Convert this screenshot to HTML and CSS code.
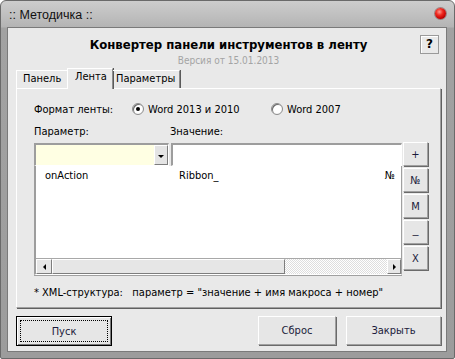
FILE: index.html
```html
<!DOCTYPE html>
<html lang="ru">
<head>
<meta charset="utf-8">
<title>Методичка</title>
<link rel="stylesheet" href="styles.css">
</head>
<body>
<div class="window">
  <div class="titlebar">
    <span class="title-text">:: Методичка ::</span>
    <span class="close-dot"></span>
  </div>
  <div class="client">
    <div class="header">
      <div class="h-title">Конвертер панели инструментов в ленту</div>
      <div class="h-version">Версия от 15.01.2013</div>
      <div class="help-btn">?</div>
    </div>
    <div class="tabs">
      <div class="tab tab-panel">Панель</div>
      <div class="tab tab-active">Лента</div>
      <div class="tab tab-params">Параметры</div>
    </div>
    <div class="panel">
      <div class="format-row">
        <span class="format-label">Формат ленты:</span>
        <span class="radio-opt opt-first"><span class="radio checked"></span>Word 2013 и 2010</span>
        <span class="radio-opt"><span class="radio"></span>Word 2007</span>
      </div>
      <div class="labels-row">
        <span class="lbl-param">Параметр:</span>
        <span>Значение:</span>
      </div>
      <div class="editor">
        <div class="left-col">
          <div class="inputs">
            <div class="combo"><span class="combo-btn"><span class="tri-down"></span></span></div>
            <div class="textbox"></div>
          </div>
          <div class="list">
            <div class="list-rows">
              <div class="list-row">
                <span class="c-param">onAction</span>
                <span class="c-value">Ribbon_</span>
                <span class="c-num">№</span>
              </div>
            </div>
            <div class="hscroll">
              <span class="sb-arrow"><span class="tri-left"></span></span>
              <span class="sb-thumb"></span>
              <span class="sb-track"></span>
              <span class="sb-arrow"><span class="tri-right"></span></span>
            </div>
          </div>
        </div>
        <div class="side-btns">
          <div class="btn side">+</div>
          <div class="btn side">№</div>
          <div class="btn side">M</div>
          <div class="btn side dash">–</div>
          <div class="btn side">X</div>
        </div>
      </div>
      <div class="footnote">* XML-структура: &nbsp; параметр = "значение + имя макроса + номер"</div>
    </div>
    <div class="actions">
      <div class="btn big default"><span class="focus">Пуск</span></div>
      <div class="spacer"></div>
      <div class="btn big reset">Сброс</div>
      <div class="btn big">Закрыть</div>
    </div>
  </div>
</div>
</body>
</html>
```
FILE: styles.css
```css
html, body {
  margin: 0;
  padding: 0;
  background: #ffffff;
}
body {
  font-family: "DejaVu Sans Condensed", "DejaVu Sans", sans-serif;
  font-stretch: condensed;
  font-size: 11px;
  color: #000;
}
.window {
  width: 455px;
  height: 359px;
  box-sizing: border-box;
  border: 1px solid #6a6a6a;
  border-radius: 6px 6px 2px 2px;
  background: linear-gradient(#cdcdcd, #b4b4b4 26px, #a2a2a2 27px, #9c9c9c);
  padding: 0 7px 6px 6px;
  display: flex;
  flex-direction: column;
}
.titlebar {
  height: 26px;
  display: flex;
  align-items: center;
  justify-content: space-between;
  padding-left: 1px;
}
.title-text {
  font-family: "Liberation Sans", Arial, sans-serif;
  font-stretch: normal;
  font-size: 12.5px;
  color: #111;
  margin-top: 2px;
  padding-left: 1px;
}
.close-dot {
  width: 11px;
  height: 11px;
  border-radius: 50%;
  background: radial-gradient(circle at 40% 35%, #ff9a90 0, #f02a20 35%, #c00000 70%, #800000 100%);
  box-shadow: 0 0 0 1px rgba(90,0,0,0.35);
  margin-right: 1px;
  margin-top: -2px;
}
.client {
  flex: 1;
  background: #e9e9e9;
  border: 1px solid #7a7a7a;
  padding: 0 5px 0 8px;
  display: flex;
  flex-direction: column;
}
.header {
  display: grid;
  grid-template-columns: 1fr auto 1fr;
  padding-top: 7px;
}
.h-title {
  grid-column: 2;
  grid-row: 1;
  font-weight: bold;
  font-size: 13px;
  line-height: 19px;
  text-align: center;
  color: #000;
}
.h-version {
  grid-column: 2;
  grid-row: 2;
  font-size: 10px;
  line-height: 13px;
  text-align: center;
  color: #a4a4a4;
}
.help-btn {
  grid-column: 3;
  grid-row: 1 / span 2;
  justify-self: end;
  align-self: start;
  width: 17px;
  height: 17px;
  margin-right: 2px;
  border: 1px solid #9a9a9a;
  box-shadow: inset 1px 1px #fff;
  font-weight: bold;
  font-size: 12px;
  line-height: 17px;
  text-align: center;
  font-family: "DejaVu Sans", sans-serif;
  font-stretch: normal;
}
.tabs {
  display: flex;
  align-items: flex-end;
  height: 21px;
  margin-top: 1px;
  margin-bottom: -1px;
  position: relative;
  z-index: 1;
}
.tab {
  box-sizing: border-box;
  height: 18px;
  line-height: 16px;
  padding-left: 6px;
  border-top: 1px solid #fff;
  margin-bottom: 1px;
}
.tab-panel {
  width: 51px;
  border-left: 1px solid #fff;
}
.tab-active {
  width: 46px;
  height: 21px;
  margin-bottom: 0;
  line-height: 15px;
  padding-left: 7px;
  border-left: 1px solid #fff;
  border-right: 1px solid #8c8c8c;
  background: #e9e9e9;
  box-shadow: 1px 0 #5a5a5a;
}
.tab-params {
  width: 67px;
  padding-left: 3px;
  border-right: 1px solid #8c8c8c;
  box-shadow: 1px 0 #5a5a5a;
}
.panel {
  width: 425px;
  box-sizing: border-box;
  border-top: 1px solid #fff;
  border-left: 1px solid #fff;
  border-right: 1px solid #a0a0a0;
  border-bottom: 1px solid #a0a0a0;
  box-shadow: 1px 1px #606060;
  padding: 13px 0 7px 17px;
}
.format-row {
  display: flex;
  align-items: center;
  height: 14px;
}
.format-label {
  width: 98px;
}
.radio-opt {
  display: flex;
  align-items: center;
  gap: 4px;
}
.opt-first {
  width: 139px;
}
.radio {
  width: 12px;
  height: 12px;
  box-sizing: border-box;
  border-radius: 50%;
  border: 1px solid #8d8d8d;
  background: radial-gradient(circle, #fff 0 50%, #e8e8e8 100%);
  box-shadow: inset 1px 1px #6a6a6a;
  display: flex;
  align-items: center;
  justify-content: center;
}
.radio.checked::after {
  content: "";
  width: 4px;
  height: 4px;
  border-radius: 50%;
  background: #000;
}
.labels-row {
  display: flex;
  margin-top: 9px;
  line-height: 14px;
}
.lbl-param {
  width: 136px;
}
.editor {
  display: grid;
  grid-template-columns: 368px 26px;
  column-gap: 1px;
  margin-top: 3px;
}
.left-col {
  display: flex;
  flex-direction: column;
  padding-top: 1px;
}
.inputs {
  display: flex;
  gap: 2px;
  height: 23px;
}
.combo {
  width: 135px;
  box-sizing: border-box;
  border-top: 2px solid #9d9d9d;
  border-left: 2px solid #9d9d9d;
  border-right: 1px solid #fff;
  border-bottom: 1px solid #fff;
  background: #ffffe3;
  display: flex;
  justify-content: flex-end;
}
.combo-btn {
  width: 14px;
  box-sizing: border-box;
  background: #e4e4e4;
  border-top: 1px solid #fff;
  border-left: 1px solid #fff;
  border-right: 1px solid #7d7d7d;
  border-bottom: 1px solid #7d7d7d;
  display: flex;
  align-items: center;
  justify-content: center;
}
.tri-down {
  width: 0;
  height: 0;
  border-left: 3px solid transparent;
  border-right: 3px solid transparent;
  border-top: 3px solid #000;
  margin-top: 2px;
}
.textbox {
  width: 231px;
  box-sizing: border-box;
  background: #fff;
  border-top: 2px solid #9d9d9d;
  border-left: 2px solid #9d9d9d;
  border-right: 1px solid #fff;
  border-bottom: 1px solid #fff;
}
.list {
  height: 109px;
  box-sizing: border-box;
  background: #fff;
  border-left: 2px solid #9d9d9d;
  border-top: 0;
  border-right: 1px solid #a0a0a0;
  border-bottom: 1px solid #fff;
  box-shadow: 0 1px #a0a0a0;
  display: flex;
  flex-direction: column;
}
.list-rows {
  flex: 1;
  padding-top: 3px;
}
.list-row {
  display: flex;
  line-height: 14px;
  padding-left: 9px;
}
.c-param {
  width: 134px;
}
.c-value {
  flex: 1;
}
.c-num {
  padding-right: 6px;
}
.hscroll {
  display: flex;
  height: 15px;
  border-top: 1px solid #a8a8a8;
}
.sb-arrow {
  width: 14px;
  box-sizing: border-box;
  background: #e6e6e6;
  border-top: 1px solid #fff;
  border-left: 1px solid #fff;
  border-right: 1px solid #7d7d7d;
  border-bottom: 1px solid #7d7d7d;
  display: flex;
  align-items: center;
  justify-content: center;
}
.sb-arrow:first-child {
  width: 16px;
}
.sb-thumb {
  width: 233px;
  box-sizing: border-box;
  background: #e6e6e6;
  border-top: 1px solid #fff;
  border-left: 1px solid #fff;
  border-right: 1px solid #7d7d7d;
  border-bottom: 1px solid #7d7d7d;
}
.sb-track {
  flex: 1;
  background: repeating-conic-gradient(#ffffff 0 25%, #dedede 0 50%) 0 0 / 2px 2px;
}
.tri-left {
  width: 0;
  height: 0;
  border-top: 3px solid transparent;
  border-bottom: 3px solid transparent;
  border-right: 3px solid #000;
}
.tri-right {
  width: 0;
  height: 0;
  border-top: 3px solid transparent;
  border-bottom: 3px solid transparent;
  border-left: 3px solid #000;
}
.side-btns {
  display: flex;
  flex-direction: column;
  gap: 2px;
}
.btn {
  box-sizing: border-box;
  background: #e6e6e6;
  border-top: 1px solid #fff;
  border-left: 1px solid #fff;
  border-right: 1px solid #a0a0a0;
  border-bottom: 1px solid #a0a0a0;
  box-shadow: 1px 1px #6a6a6a;
  display: flex;
  align-items: center;
  justify-content: center;
  color: #1a1a3a;
}
.side {
  height: 24px;
  width: 25px;
  font-size: 11px;
}
.dash {
  font-family: "Liberation Sans", Arial, sans-serif;
  font-stretch: normal;
  padding-top: 3px;
}
.footnote {
  margin-top: 11px;
  line-height: 14px;
  white-space: pre;
}
.actions {
  display: flex;
  margin-top: 8px;
  height: 30px;
  width: 425px;
}
.spacer {
  flex: 1;
}
.big {
  width: 95px;
  height: 29px;
  font-size: 11px;
}
.reset {
  width: 78px;
  margin-right: 10px;
}
.default {
  border: 1px solid #000;
  box-shadow: inset 1px 1px #fff, inset -1px -1px #7a7a7a;
  height: 30px;
  width: 96px;
  padding: 3px;
}
.focus {
  flex: 1;
  align-self: stretch;
  display: flex;
  align-items: center;
  justify-content: center;
  border: 1px dotted #000;
}
```
